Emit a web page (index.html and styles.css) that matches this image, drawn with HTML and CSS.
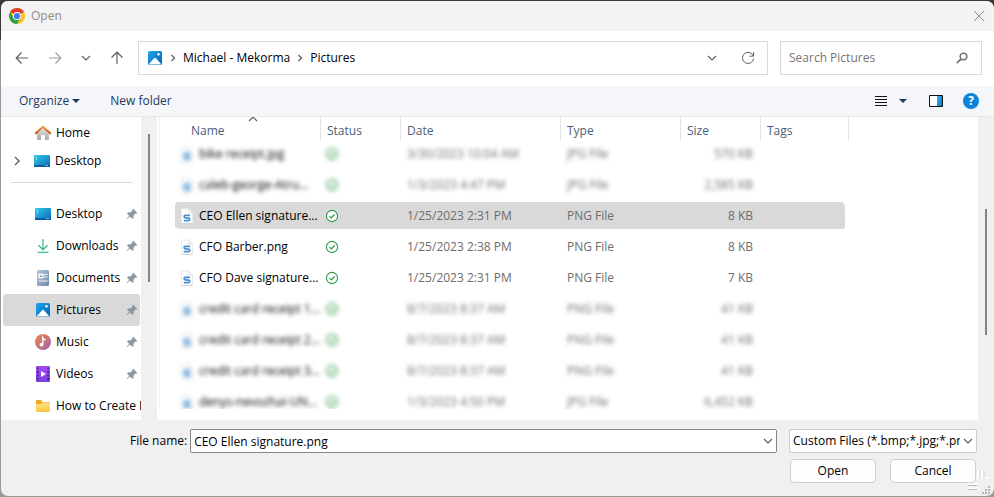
FILE: index.html
```
<!DOCTYPE html>
<html lang="en">
<head>
  <meta charset="utf-8">
  <meta name="viewport" content="width=device-width, initial-scale=1">
  <title>Open</title>
  <link rel="stylesheet" href="styles.css">
</head>
<body>

  <!-- Shared icons -->
  <svg class="sprite" aria-hidden="true">
    <defs>
      <linearGradient id="blue" x1="0" y1="0" x2="1" y2="1">
        <stop offset="0" stop-color="#1fa5ec"/><stop offset="1" stop-color="#0565b8"/>
      </linearGradient>
      <linearGradient id="bright" x1="0" y1="0" x2="1" y2="1">
        <stop offset="0" stop-color="#35b5f2"/><stop offset="1" stop-color="#0a78d0"/>
      </linearGradient>
      <linearGradient id="cyan" x1="0" y1="0" x2="1" y2="1">
        <stop offset="0" stop-color="#2fd0e8"/><stop offset="1" stop-color="#0c62b8"/>
      </linearGradient>
      <linearGradient id="roof" x1="0" y1="0" x2="0" y2="1">
        <stop offset="0" stop-color="#f5a13c"/><stop offset="1" stop-color="#cc4f14"/>
      </linearGradient>
      <linearGradient id="wall" x1="0" y1="0" x2="0" y2="1">
        <stop offset="0" stop-color="#e4e4e4"/><stop offset="1" stop-color="#a9a9a9"/>
      </linearGradient>
      <linearGradient id="note" x1="0" y1="0" x2="1" y2="1">
        <stop offset="0" stop-color="#f08a4b"/><stop offset="1" stop-color="#a25cab"/>
      </linearGradient>
      <linearGradient id="film" x1="0" y1="0" x2="0" y2="1">
        <stop offset="0" stop-color="#a64df0"/><stop offset="1" stop-color="#7a3fe0"/>
      </linearGradient>
      <linearGradient id="paper" x1="0" y1="0" x2="1" y2="1">
        <stop offset="0" stop-color="#b3c6dc"/><stop offset="1" stop-color="#7189a5"/>
      </linearGradient>
      <linearGradient id="fold" x1="0" y1="0" x2="0" y2="1">
        <stop offset="0" stop-color="#ffe08a"/><stop offset="1" stop-color="#fcc73c"/>
      </linearGradient>
    </defs>
    <symbol id="chevron-down" viewBox="0 0 10 10"><path d="M1 3l4 4 4-4" fill="none" stroke="currentColor" stroke-width="1.100"/></symbol>
    <symbol id="chevron-right" viewBox="0 0 10 10"><path d="M3.500 2l3 3-3 3" fill="none" stroke="currentColor" stroke-width="1.300"/></symbol>
    <symbol id="chevron-wide" viewBox="0 0 10 10"><path d="M3 1l4 4-4 4" fill="none" stroke="currentColor" stroke-width="1.400"/></symbol>
    <symbol id="caret" viewBox="0 0 8 8"><path d="M0 2h8L4 6z" fill="currentColor"/></symbol>
    <symbol id="arrow" viewBox="0 0 14 14"><path d="M13 7H1.500M6.500 1.500L1.200 7l5.300 5.500" fill="none" stroke="currentColor" stroke-width="1.200"/></symbol>
    <symbol id="picture" viewBox="0 0 16 16">
      <rect x="1" y="1" width="14" height="14" rx="1.500" fill="url(#blue)"/>
      <path d="M1.500 14.500L7.300 8q.7-.7 1.400 0l5.800 6.500z" fill="#fff"/>
      <circle cx="11.500" cy="4.300" r="1.200" fill="#fff"/>
    </symbol>
    <symbol id="desktop" viewBox="0 0 16 16">
      <rect y="2" width="16" height="12" rx="1" fill="url(#cyan)"/>
      <path d="M0 12h16v1q0 1-1 1H1q-1 0-1-1z" fill="#0d5a9d"/>
      <path d="M2 4h1v1H2zM2 6h1v1H2z" fill="#b9f1fa"/>
      <path d="M11 12.500h3" stroke="#58b8ec"/>
    </symbol>
    <symbol id="home" viewBox="0 0 16 16">
      <path d="M2 8l6-5.500L14 8v6q0 1-1 1h-3v-5H6v5H3q-1 0-1-1z" fill="url(#wall)"/>
      <path d="M.8 8.300L8 1.700l7.200 6.600" fill="none" stroke="url(#roof)" stroke-width="2" stroke-linecap="round" stroke-linejoin="round"/>
    </symbol>
    <symbol id="download" viewBox="0 0 16 16"><path d="M8 1v10.500M3.500 7.300L8 11.800l4.500-4.500M2.500 14.300h11" fill="none" stroke="#3dbd9c" stroke-width="1.300"/></symbol>
    <symbol id="document" viewBox="0 0 16 16">
      <rect x="2" width="12" height="16" rx="1.300" fill="url(#paper)"/>
      <path d="M4 4h4v4H4zM9 4.500h3.500M9 7h3.500M4 11h8.500" fill="#f3f7fb" stroke="#f3f7fb" stroke-width="1.100"/>
      <path d="M5 5.500h2V7H5z" fill="#7f96b2"/>
    </symbol>
    <symbol id="music" viewBox="0 0 16 16">
      <circle cx="8" cy="8" r="8" fill="url(#note)"/>
      <circle cx="6.500" cy="10.700" r="1.900" fill="#fff"/>
      <path d="M7.800 10.700V3.800q1 1.700 3 2.100" fill="none" stroke="#fff" stroke-width="1.400"/>
    </symbol>
    <symbol id="video" viewBox="0 0 16 16">
      <rect x="1" width="14" height="16" rx="1" fill="url(#film)"/>
      <path d="M2.800 1.500v14M13.200 1.500v14" stroke="#4b2293" stroke-width="1.700" stroke-dasharray="2 1.500"/>
      <path d="M6 5l5 3-5 3z" fill="#fff"/>
    </symbol>
    <symbol id="folder" viewBox="0 0 16 16">
      <path d="M1 3q0-1 1-1h4l1.500 2H14q1 0 1 1v2H1z" fill="#f0a91c"/>
      <path d="M1 6h5l1.500-1.500H14q1 0 1 1V13q0 1-1 1H2q-1 0-1-1z" fill="url(#fold)"/>
    </symbol>
    <symbol id="pin" viewBox="0 0 12 12"><path d="M7.200.8l4 4-1 .9-.7-.2-2 2 .1 2.200-1.200 1.200-2.400-2.500L1 11.200l-.4-.4 2.700-3L1 5.400l1.200-1.100 2.200.1 2-2-.2-.7z" fill="#8b98a3"/></symbol>
    <symbol id="png" viewBox="0 0 12 16">
      <path d="M.5 1h7.300l3.700 3.700v10.800H.5z" fill="#fdfdfd" stroke="#e9eaec"/>
      <path d="M7.800 1v3.700h3.700" fill="#f4f4f4" stroke="#e3e4e6"/>
      <path d="M.5 15.500h11" stroke="#cfd2d5"/>
      <path d="M9 7.300H4.300q-1.200 0-1.200 1.200t1.300 1.300l3 .3q1.300.1 1.300 1.300t-1.300 1.300H2.800" fill="none" stroke="#4591d2" stroke-width="1.700"/>
    </symbol>
    <symbol id="synced" viewBox="0 0 14 14">
      <circle cx="7" cy="7" r="5.600" fill="#fff" stroke="#2e9a48" stroke-width="1.100"/>
      <path d="M4.500 7.200l1.800 1.800 3.300-3.500" fill="none" stroke="#2e9a48" stroke-width="1.200"/>
    </symbol>
  </svg>

  <div class="dialog">
    <header class="titlebar">
      <svg class="icon" viewBox="0 0 16 16" aria-hidden="true">
        <circle cx="8" cy="8" r="8" fill="#fcc31e"/>
        <path d="M8 8L1.100 4A8 8 0 0 1 14.900 4z" fill="#e33b2e"/>
        <path d="M1.100 4A8 8 0 0 0 8 16l3.500-6L8 8 4.500 10z" fill="#2da04d"/>
        <circle cx="8" cy="8" r="4" fill="#fff"/>
        <circle cx="8" cy="8" r="3.100" fill="#3b7ded"/>
      </svg>
      <h1>Open</h1>
      <button class="close" aria-label="Close">
        <svg viewBox="0 0 12 12"><path d="M1 1l10 10M11 1L1 11" stroke="currentColor"/></svg>
      </button>
    </header>

    <div class="navbar">
      <div class="history">
        <button aria-label="Back"><svg class="arrow"><use href="#arrow"/></svg></button>
        <button aria-label="Forward" class="dim"><svg class="arrow forward"><use href="#arrow"/></svg></button>
        <button aria-label="Recent locations"><svg class="small"><use href="#chevron-down"/></svg></button>
        <button aria-label="Up"><svg class="arrow up"><use href="#arrow"/></svg></button>
      </div>
      <nav class="address" aria-label="Address">
        <svg class="icon"><use href="#picture"/></svg>
        <svg class="small"><use href="#chevron-right"/></svg>
        <a href="#">Michael - Mekorma</a>
        <svg class="small"><use href="#chevron-right"/></svg>
        <a href="#">Pictures</a>
        <button class="previous" aria-label="Previous locations"><svg class="small"><use href="#chevron-down"/></svg></button>
        <button aria-label="Refresh">
          <svg class="arrow" viewBox="0 0 14 14"><path d="M12.300 5A5.600 5.600 0 1 0 12.600 7.500M12.600 1v4.200H8.500" fill="none" stroke="currentColor"/></svg>
        </button>
      </nav>
      <div class="search">
        <input type="text" placeholder="Search Pictures" aria-label="Search Pictures">
        <svg viewBox="0 0 12 12"><circle cx="7.500" cy="4.500" r="3.300" fill="none" stroke="#777" stroke-width="1.600"/><path d="M5 7L.8 11.200" stroke="#777" stroke-width="1.800"/></svg>
      </div>
    </div>

    <div class="toolbar">
      <button>Organize <svg class="caret"><use href="#caret"/></svg></button>
      <button>New folder</button>
      <div class="views">
        <button aria-label="Details view"><svg viewBox="0 0 12 12" class="lines"><path d="M0 1.500h12M0 4.500h12M0 7.500h12M0 10.500h12" stroke="#111"/></svg></button>
        <button aria-label="More views"><svg class="caret"><use href="#caret"/></svg></button>
        <button aria-label="Preview pane"><svg viewBox="0 0 14 12" class="pane"><path d="M.5.5h13v11H.5z" fill="#fff"/><path d="M8 1h5v10H8z" fill="url(#bright)"/><path d="M.5.5h13v11H.5z" fill="none" stroke="#111"/></svg></button>
        <button aria-label="Help" class="help">?</button>
      </div>
    </div>

    <main class="browser">
      <nav class="sidebar" aria-label="Folders">
        <ul class="tree">
          <li><a href="#"><svg class="icon"><use href="#home"/></svg>Home</a></li>
          <li><a href="#" class="root"><svg class="small"><use href="#chevron-wide"/></svg><svg class="icon"><use href="#desktop"/></svg>Desktop</a></li>
        </ul>
        <hr>
        <ul class="quick">
          <li><a href="#"><svg class="icon"><use href="#desktop"/></svg>Desktop<svg class="pin"><use href="#pin"/></svg></a></li>
          <li><a href="#"><svg class="icon"><use href="#download"/></svg>Downloads<svg class="pin"><use href="#pin"/></svg></a></li>
          <li><a href="#"><svg class="icon"><use href="#document"/></svg>Documents<svg class="pin"><use href="#pin"/></svg></a></li>
          <li><a href="#" class="current"><svg class="icon"><use href="#picture"/></svg>Pictures<svg class="pin"><use href="#pin"/></svg></a></li>
          <li><a href="#"><svg class="icon"><use href="#music"/></svg>Music<svg class="pin"><use href="#pin"/></svg></a></li>
          <li><a href="#"><svg class="icon"><use href="#video"/></svg>Videos<svg class="pin"><use href="#pin"/></svg></a></li>
          <li><a href="#"><svg class="icon"><use href="#folder"/></svg>How to Create D</a></li>
        </ul>
      </nav>
      <div class="scrollbar side"><div class="thumb"></div></div>

      <section class="files">
        <div class="list">
          <table>
            <colgroup>
              <col class="col-name"><col class="col-status"><col class="col-date"><col class="col-type"><col class="col-size"><col class="col-tags">
            </colgroup>
            <thead>
              <tr><th>Name<svg class="sort"><use href="#chevron-down"/></svg></th><th>Status</th><th>Date</th><th>Type</th><th>Size</th><th>Tags</th></tr>
            </thead>
            <tbody>
              <tr class="blurred"><td><div class="file"><svg><use href="#png"/></svg><span>bike receipt.jpg</span></div></td><td><svg class="synced"><use href="#synced"/></svg></td><td><span>3/30/2023 10:04 AM</span></td><td><span>JPG File</span></td><td><span>570 KB</span></td><td></td></tr>
              <tr class="blurred"><td><div class="file"><svg><use href="#png"/></svg><span>caleb-george-Atru...</span></div></td><td><svg class="synced"><use href="#synced"/></svg></td><td><span>1/3/2023 4:47 PM</span></td><td><span>JPG File</span></td><td><span>2,585 KB</span></td><td></td></tr>
              <tr class="selected"><td><div class="file"><svg><use href="#png"/></svg><span>CEO Ellen signature...</span></div></td><td><svg class="synced"><use href="#synced"/></svg></td><td>1/25/2023 2:31 PM</td><td>PNG File</td><td>8 KB</td><td></td></tr>
              <tr><td><div class="file"><svg><use href="#png"/></svg><span>CFO Barber.png</span></div></td><td><svg class="synced"><use href="#synced"/></svg></td><td>1/25/2023 2:38 PM</td><td>PNG File</td><td>8 KB</td><td></td></tr>
              <tr><td><div class="file"><svg><use href="#png"/></svg><span>CFO Dave signature...</span></div></td><td><svg class="synced"><use href="#synced"/></svg></td><td>1/25/2023 2:31 PM</td><td>PNG File</td><td>7 KB</td><td></td></tr>
              <tr class="blurred"><td><div class="file"><svg><use href="#png"/></svg><span>credit card receipt 1...</span></div></td><td><svg class="synced"><use href="#synced"/></svg></td><td><span>8/7/2023 8:37 AM</span></td><td><span>PNG File</span></td><td><span>41 KB</span></td><td></td></tr>
              <tr class="blurred"><td><div class="file"><svg><use href="#png"/></svg><span>credit card receipt 2...</span></div></td><td><svg class="synced"><use href="#synced"/></svg></td><td><span>8/7/2023 8:37 AM</span></td><td><span>PNG File</span></td><td><span>41 KB</span></td><td></td></tr>
              <tr class="blurred"><td><div class="file"><svg><use href="#png"/></svg><span>credit card receipt 3...</span></div></td><td><svg class="synced"><use href="#synced"/></svg></td><td><span>8/7/2023 8:37 AM</span></td><td><span>PNG File</span></td><td><span>41 KB</span></td><td></td></tr>
              <tr class="blurred"><td><div class="file"><svg><use href="#png"/></svg><span>denys-nevozhai-UN...</span></div></td><td><svg class="synced"><use href="#synced"/></svg></td><td><span>1/3/2023 4:50 PM</span></td><td><span>JPG File</span></td><td><span>6,452 KB</span></td><td></td></tr>
            </tbody>
          </table>
        </div>
      </section>
      <div class="scrollbar main"><div class="thumb"></div></div>
    </main>

    <footer class="footer">
      <div class="fields">
        <label for="filename">File name:</label>
        <div class="combo filename">
          <input id="filename" type="text" value="CEO Ellen signature.png">
          <svg class="small"><use href="#chevron-down"/></svg>
        </div>
        <div class="combo filetype">
          <select aria-label="File type">
            <option>Custom Files (*.bmp;*.jpg;*.png)</option>
          </select>
          <svg class="small"><use href="#chevron-down"/></svg>
        </div>
      </div>
      <div class="actions">
        <button>Open</button>
        <button>Cancel</button>
      </div>
      <svg class="grip" viewBox="0 0 28 28" aria-hidden="true">
        <path d="M12 2v9M16 2v9M19 10h4" stroke="#fff" stroke-width="2"/>
        <path d="M14 2v9M18 2v9" stroke="#d4d4d4"/>
        <path d="M2 16.500h9M2 20.500h9" stroke="#fff" stroke-width="2"/>
        <path d="M2 17.500h9M2 21.500h9" stroke="#bbb"/>
        <path d="M22 18h2v2h-2zM19 21h2v2h-2zM22 21h2v2h-2zM16 24h2v2h-2zM19 24h2v2h-2zM22 24h2v2h-2z" fill="#b5b5b5"/>
      </svg>
    </footer>
  </div>

</body>
</html>
```
FILE: styles.css
```
:root {
  --face: #f0f0f0;
  --text: #000000;
  --muted: #6d6d6d;
  --heading: #4c607a;
  --command: #1e395b;
  --line: #d9d9d9;
  --selected: #d9d9d9;
  --glyph: #5f5f5f;
  --font-size: 12px;
}

* {
  box-sizing: border-box;
}

body {
  margin: 0;
  background: linear-gradient(#3b383c 0, #3b383c 40px, #9a9a9a 40px);
  font-family: "Open Sans", "Noto Sans", sans-serif;
  font-size: var(--font-size);
  line-height: 16px;
  color: var(--text);
}

.sprite {
  position: absolute;
  width: 0;
  height: 0;
}

button, input, select {
  font: inherit;
  color: inherit;
}

button {
  display: flex;
  align-items: center;
  justify-content: center;
  padding: 0;
  border: 0;
  background: none;
}

a {
  color: inherit;
  text-decoration: none;
}

svg {
  display: block;
  flex: none;
}

ul {
  margin: 0;
  padding: 0;
  list-style: none;
}

.icon {
  width: 16px;
  height: 16px;
}

.small {
  width: 10px;
  height: 10px;
  color: var(--glyph);
}

.dialog {
  display: flex;
  flex-direction: column;
  height: 100vh;
  border: solid transparent;
  border-width: 1px 0 1px 1px;
  border-radius: 8px;
  background: var(--face) padding-box;
  overflow: hidden;
}

/* Title bar */
.titlebar {
  display: flex;
  align-items: center;
  gap: 6px;
  height: 30px;
  flex: none;
  padding: 0 9px 0 8px;
  background: #f3f3f3;
  color: #8c8c8c;
}

.titlebar h1 {
  margin: 0;
  font-size: var(--font-size);
  font-weight: 400;
}

.close {
  margin-left: auto;
}

.close svg {
  width: 12px;
  height: 12px;
}

/* Navigation */
.navbar {
  display: flex;
  align-items: center;
  height: 55px;
  flex: none;
  padding: 0 12px 1px 14px;
  background: #fff;
}

.history {
  display: flex;
  justify-content: space-between;
  width: 109px;
  margin-right: 14px;
  color: var(--glyph);
}

.history .dim {
  color: #a0a0a0;
}

.arrow {
  width: 14px;
  height: 14px;
}

.forward {
  transform: scaleX(-1);
}

.up {
  transform: rotate(90deg);
}

.address, .search {
  display: flex;
  align-items: center;
  height: 34px;
  border: 1px solid var(--line);
}

.address {
  flex: 1;
  gap: 5px;
  padding: 0 12px 0 8px;
  color: var(--glyph);
}

.address a {
  color: var(--text);
}

.address .previous {
  margin: 0 19px 0 auto;
}

.search {
  width: 202px;
  margin-left: 12px;
  padding: 0 13px 0 8px;
}

.search input {
  flex: 1;
  min-width: 0;
  padding: 0;
  border: 0;
  outline: 0;
}

.search input::placeholder {
  color: #747474;
}

.search svg {
  width: 12px;
  height: 12px;
}

/* Commands */
.toolbar {
  display: flex;
  align-items: center;
  gap: 30px;
  height: 31px;
  flex: none;
  padding: 0 15px 0 18px;
  border-bottom: 1px solid #e8e9eb;
  background: #f4f6f9;
  color: var(--command);
}

.toolbar button {
  gap: 3px;
}

.caret {
  width: 8px;
  height: 8px;
}

.views {
  display: flex;
  align-items: center;
  gap: 12px;
  margin-left: auto;
}

.lines {
  width: 12px;
  height: 12px;
}

.pane {
  width: 14px;
  height: 12px;
  margin: 0 8px 0 10px;
}

.toolbar .help {
  width: 16px;
  height: 16px;
  border-radius: 50%;
  background: #0f83d8;
  color: #fff;
  font-weight: 700;
}

/* Folder pane */
.browser {
  display: flex;
  flex: 1;
  min-height: 0;
}

.sidebar {
  width: 140px;
  padding: 2px 1px 0 2px;
  background: #fff;
  overflow: hidden;
}

.sidebar a {
  display: flex;
  align-items: center;
  gap: 5px;
  height: 32px;
  padding: 0 2px 0 32px;
  border-radius: 3px;
  white-space: nowrap;
}

.sidebar .tree a {
  height: 28px;
}

.sidebar .root {
  padding-left: 9px;
}

.root .small {
  margin-right: 7px;
}

.sidebar .current {
  background: var(--selected);
}

.sidebar hr {
  margin: 7px 8px 15px;
  border: 0;
  border-top: 1px solid var(--line);
}

.pin {
  width: 12px;
  height: 12px;
  margin-left: auto;
}

.scrollbar {
  width: 16px;
  flex: none;
  padding: 0 7px;
}

.thumb {
  width: 2px;
  background: #858585;
}

.side .thumb {
  height: 148px;
  margin-top: 17px;
}

.main .thumb {
  height: 126px;
  margin-top: 92px;
}

/* File list */
.files {
  display: flex;
  flex: 1;
  min-width: 0;
  padding-left: 2px;
  background: #fff;
}

.list {
  flex: 1;
  margin-bottom: 11px;
  padding-left: 15px;
  border-left: 1px solid #f0f0f0;
  overflow: hidden;
}

table {
  width: 674px;
  border-spacing: 0;
  table-layout: fixed;
}

.col-name { width: 146px; }
.col-status, .col-size { width: 80px; }
.col-date { width: 160px; }
.col-type { width: 120px; }
.col-tags { width: 88px; }

th {
  position: relative;
  height: 23px;
  padding: 4px 6px 0;
  border-right: 1px solid #e2e3e5;
  color: var(--heading);
  font-weight: 400;
  text-align: left;
}

th:first-child {
  padding-left: 16px;
}

.sort {
  position: absolute;
  top: -3px;
  left: 73px;
  width: 10px;
  height: 10px;
  color: var(--glyph);
  transform: scaleY(-1);
}

/* The transparent border leaves a gap between the row highlights */
td {
  height: 31px;
  padding: 0 6px;
  border-bottom: 4px solid transparent;
  background-clip: padding-box;
  color: var(--muted);
  white-space: nowrap;
}

td:first-child {
  border-radius: 3px 0 0 7px;
}

td:nth-child(5) {
  padding-right: 8px;
  text-align: right;
}

td:last-child {
  border-right: 4px solid transparent;
  border-radius: 0 7px 7px 0;
}

.selected td {
  background-color: var(--selected);
}

.file {
  display: flex;
  align-items: center;
  gap: 6px;
  color: var(--text);
}

.file svg {
  width: 12px;
  height: 16px;
}

.synced {
  width: 14px;
  height: 14px;
  margin-left: -2px;
}

.blurred td > *, .blurred .file > * {
  filter: blur(2px);
}

.blurred .file {
  filter: none;
}

/* Footer */
.footer {
  position: relative;
  flex: none;
  height: 76px;
  padding: 9px 17px 0 129px;
}

.fields {
  display: flex;
  align-items: center;
}

.combo {
  position: relative;
}

.combo .small {
  position: absolute;
  top: 7px;
  right: 4px;
  pointer-events: none;
}

.combo input, .combo select {
  display: block;
  width: 100%;
  height: 24px;
  border: 1px solid #868686;
  border-radius: 2px;
  background: #fff;
}

.combo input {
  padding: 0 20px 0 3px;
}

.combo select {
  padding: 0 16px 0 3px;
  border-color: #cccccc;
  appearance: none;
}

.filename {
  flex: 1;
  margin: 0 12px 0 3px;
}

.filetype {
  width: 188px;
}

.actions {
  display: flex;
  justify-content: flex-end;
  gap: 14px;
  margin: 6px 1px 0 0;
}

.actions button {
  width: 86px;
  height: 24px;
  border: 1px solid #d0d0d0;
  border-radius: 4px;
  background: #fdfdfd;
}

.grip {
  position: absolute;
  right: 0;
  bottom: 0;
  width: 28px;
  height: 28px;
}
```
